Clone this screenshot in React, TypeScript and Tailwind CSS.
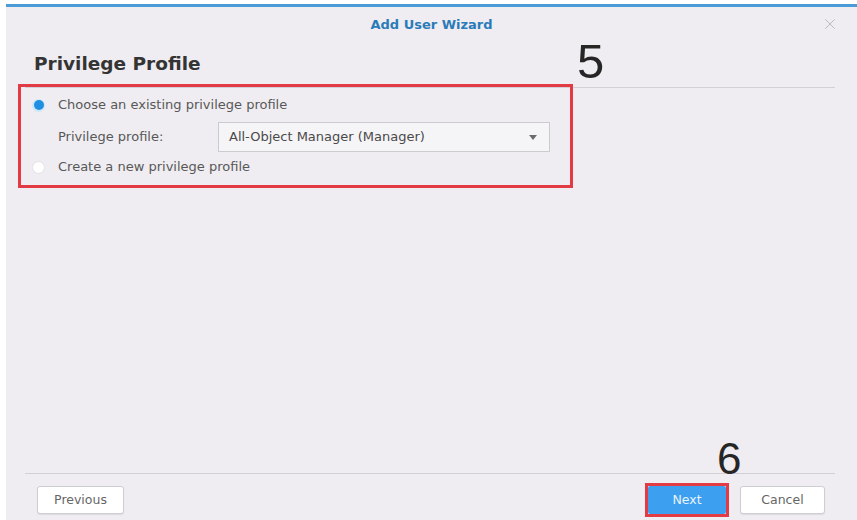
import { X } from "lucide-react";

const font = { fontFamily: '"DejaVu Sans", Verdana, sans-serif' };

const Radio = ({ checked }: { checked?: boolean }) =>
  checked ? (
    <span className="flex h-[13px] w-[13px] items-center justify-center rounded-full bg-[#cfe6f8]">
      <span className="h-[10px] w-[10px] rounded-full bg-[#1f8fe2]" />
    </span>
  ) : (
    <span className="h-[13px] w-[13px] rounded-full border border-[#e2e2e6] bg-white" />
  );

const WizardButton = ({ label, primary }: { label: string; primary?: boolean }) => (
  <button
    className={
      primary
        ? "h-[28px] w-[78px] rounded-[2px] bg-[#3d9ff0] text-[12.5px] text-[#eaf4fd]"
        : "h-[28px] w-full rounded-[3px] border border-[#cdcdd2] bg-white text-[12.5px] text-[#666] shadow-[0_1px_1px_rgba(0,0,0,0.08)]"
    }
  >
    {label}
  </button>
);

export default function App() {
  return (
    <div className="relative h-[520px] w-[857px] bg-white pl-[6px] pt-[4px]" style={font}>
      <div className="flex h-full flex-col border-t-[3px] border-[#4a9bd6] bg-[#efedf1]">
        {/* header */}
        <div className="relative flex h-[36px] shrink-0 items-center justify-center">
          <span className="text-[13px] font-bold text-[#2b7bb9]">Add User Wizard</span>
          <X className="absolute right-[18px] top-[8px] h-[18px] w-[18px] text-[#b5b5b8]" strokeWidth={1.2} />
        </div>

        {/* body */}
        <div className="flex flex-1 flex-col pr-[22px]">
          <div className="ml-[19px] border-b border-[#d2d0d6] pb-[12px] pl-[9px] pt-[10px]">
            <h1 className="text-[18.5px] font-bold leading-[22px] text-[#343434]">Privilege Profile</h1>
          </div>

          <div className="relative ml-[12px] mt-[-4px] w-[555px]">
            <div className="pointer-events-none absolute inset-0 border-[3px] border-[#e23b44]" />
            <div className="flex flex-col pb-[12px] pl-[14px] pt-[10px] text-[13px] text-[#585858]">
              <label className="flex h-[22px] items-center gap-[13px]">
                <Radio checked />
                <span>Choose an existing privilege profile</span>
              </label>
              <div className="flex h-[42px] items-center pl-[26px]">
                <span className="w-[160px]">Privilege profile:</span>
                <div className="flex h-[30px] w-[332px] items-center justify-between border border-[#cbcbd0] bg-[#f5f4f7] pl-[10px] pr-[12px] text-[13px] text-[#4a4a4a]">
                  <span>All-Object Manager (Manager)</span>
                  <span className="h-0 w-0 border-x-[4px] border-t-[5px] border-x-transparent border-t-[#6b6b6b]" />
                </div>
              </div>
              <label className="flex h-[18px] items-center gap-[13px]">
                <Radio />
                <span>Create a new privilege profile</span>
              </label>
            </div>
          </div>
        </div>

        {/* footer */}
        <div className="mb-[3px] ml-[19px] mr-[22px] flex items-center justify-between border-t border-[#d2d0d6] pl-[12px] pr-[10px] pt-[9px]">
          <div className="w-[87px]">
            <WizardButton label="Previous" />
          </div>
          <div className="flex items-center gap-[11px]">
            <div className="border-[3px] border-[#e23b44]">
              <WizardButton label="Next" primary />
            </div>
            <div className="w-[85px]">
              <WizardButton label="Cancel" />
            </div>
          </div>
        </div>
      </div>

      <span
        className="absolute left-[577px] top-[37px] text-[49px] leading-none text-[#262626]"
        style={{ fontFamily: '"Liberation Sans", Arial, sans-serif' }}
      >
        5
      </span>
      <span
        className="absolute left-[717px] top-[437px] text-[44px] leading-none text-[#262626]"
        style={{ fontFamily: '"Liberation Sans", Arial, sans-serif' }}
      >
        6
      </span>
    </div>
  );
}
